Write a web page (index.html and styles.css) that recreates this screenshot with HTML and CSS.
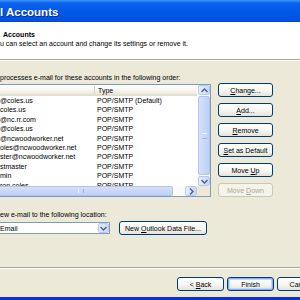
FILE: index.html
```html
<!DOCTYPE html>
<html>
<head>
    <meta charset="UTF-8">
    <title>E-mail Accounts</title>
    <link rel="stylesheet" href="styles.css">
</head>
<body>

<div class="window">
    <div class="titlebar">l Accounts</div>

    <div class="header">
        <div class="header-title">Accounts</div>
        <div class="header-text">u can select an account and change its settings or remove it.</div>
    </div>

    <div class="main">
        <div class="label order-label">processes e-mail for these accounts in the following order:</div>

        <div class="accounts">
            <div class="listbox">
                <div class="list-inner">
                    <div class="list-head">
                        <span class="col-name"></span>
                        <span class="col-type">Type</span>
                    </div>
                    <div class="rows">
                        <div class="row"><span class="col-name">@coles.us</span><span class="col-type">POP/SMTP (Default)</span></div>
                        <div class="row"><span class="col-name">coles.us</span><span class="col-type">POP/SMTP</span></div>
                        <div class="row"><span class="col-name">@nc.rr.com</span><span class="col-type">POP/SMTP</span></div>
                        <div class="row"><span class="col-name">@coles.us</span><span class="col-type">POP/SMTP</span></div>
                        <div class="row"><span class="col-name">@ncwoodworker.net</span><span class="col-type">POP/SMTP</span></div>
                        <div class="row"><span class="col-name">oles@ncwoodworker.net</span><span class="col-type">POP/SMTP</span></div>
                        <div class="row"><span class="col-name">ster@ncwoodworker.net</span><span class="col-type">POP/SMTP</span></div>
                        <div class="row"><span class="col-name">stmaster</span><span class="col-type">POP/SMTP</span></div>
                        <div class="row"><span class="col-name">min</span><span class="col-type">POP/SMTP</span></div>
                        <div class="row"><span class="col-name">ron.coles</span><span class="col-type">POP/SMTP</span></div>
                    </div>
                    <div class="vscroll">
                        <div class="sb-btn">
                            <svg width="7" height="5" viewBox="0 0 7 5"><path d="M0.5 4 L3.5 1 L6.5 4" fill="none" stroke="#4d6185" stroke-width="1.4"/></svg>
                        </div>
                        <div class="vthumb"><span class="grip-v"></span></div>
                        <div class="sb-btn">
                            <svg width="7" height="5" viewBox="0 0 7 5"><path d="M0.5 1 L3.5 4 L6.5 1" fill="none" stroke="#4d6185" stroke-width="1.4"/></svg>
                        </div>
                    </div>
                </div>
                <div class="hscroll">
                    <div class="hthumb"><span class="grip-h"></span></div>
                    <div class="htrack"></div>
                    <div class="sb-btn">
                        <svg width="5" height="7" viewBox="0 0 5 7"><path d="M1 0.5 L4 3.5 L1 6.5" fill="none" stroke="#4d6185" stroke-width="1.4"/></svg>
                    </div>
                    <div class="corner"></div>
                </div>
            </div>

            <div class="side-buttons">
                <button class="xp-btn"><u>C</u>hange...</button>
                <button class="xp-btn"><u>A</u>dd...</button>
                <button class="xp-btn"><u>R</u>emove</button>
                <button class="xp-btn"><u>S</u>et as Default</button>
                <button class="xp-btn">Move <u>U</u>p</button>
                <button class="xp-btn" disabled>Move <u>D</u>own</button>
            </div>
        </div>

        <div class="label deliver-label">ew e-mail to the following location:</div>
        <div class="deliver">
            <div class="select">
                <span class="select-text">Email</span>
                <span class="select-btn">
                    <svg width="7" height="5" viewBox="0 0 7 5"><path d="M0.5 1 L3.5 4 L6.5 1" fill="none" stroke="#4d6185" stroke-width="1.4"/></svg>
                </span>
            </div>
            <button class="xp-btn wide">New <u>O</u>utlook Data File...</button>
        </div>
    </div>

    <div class="footer">
        <button class="xp-btn">&lt; <u>B</u>ack</button>
        <button class="xp-btn default">Finish</button>
        <button class="xp-btn">Cancel</button>
    </div>
</div>

</body>
</html>
```

FILE: styles.css
```css
body {
    margin: 0;
    padding: 0;
    font-family: "Liberation Sans", Arial, sans-serif;
    font-size: 7px;
    color: #000;
    background-color: #ece9d8;
}

.window {
    width: 300px;
    height: 300px;
    overflow: hidden;
    display: flex;
    flex-direction: column;
    background-color: #ece9d8;
    border-bottom: 3px solid #0831d9;
    box-sizing: border-box;
}

/* Title bar */
.titlebar {
    height: 22px;
    line-height: 24px;
    flex-shrink: 0;
    background: linear-gradient(#3d95ff 0, #0a62ec 3px, #0058e6 12px, #0253e1 20px, #0845c8 22px);
    color: white;
    font-weight: bold;
    font-size: 11.5px;
    padding-left: 0;
    white-space: nowrap;
    text-shadow: 1px 1px 0 #0a2a9a;
}

/* White header */
.header {
    height: 38px;
    flex-shrink: 0;
    background-color: #fff;
    border-bottom: 1px solid #aca899;
    box-shadow: 0 1px 0 #fff;
    padding-top: 8px;
    box-sizing: border-box;
    white-space: nowrap;
}

.header-title {
    font-weight: bold;
    padding-left: 3px;
    line-height: 9px;
}

.header-text {
    line-height: 10px;
}

/* Main area */
.main {
    flex: 1;
    padding-top: 13px;
}

.label {
    white-space: nowrap;
    line-height: 9px;
}

.accounts {
    display: flex;
    gap: 7px;
    margin-top: 2px;
}

.listbox {
    width: 211px;
    height: 113px;
    border: 1px solid #7f9db9;
    border-left: none;
    box-sizing: border-box;
    background-color: #fff;
    display: flex;
    flex-direction: column;
    overflow: hidden;
}

.list-inner {
    flex: 1;
    display: flex;
    flex-wrap: wrap;
    position: relative;
    overflow: hidden;
}

.list-head {
    width: 197px;
    height: 11px;
    line-height: 11px;
    display: flex;
    background: linear-gradient(#fff, #f6f5ee 60%, #ebeadb);
    border-bottom: 2px solid #e2e0d0;
    box-sizing: border-box;
}

.list-head .col-name {
    border-right: 1px solid #d6d2c2;
    height: 8px;
    margin-top: 1px;
}

.rows {
    width: 197px;
}

.row {
    display: flex;
    height: 9.4px;
    line-height: 9.4px;
    white-space: nowrap;
}

.col-name {
    width: 94px;
    flex-shrink: 0;
    overflow: hidden;
}

.col-type {
    padding-left: 3px;
}

/* Scrollbars */
.vscroll {
    position: absolute;
    right: 0;
    top: 0;
    bottom: 0;
    width: 12px;
    display: flex;
    flex-direction: column;
    background-color: #fbfbf8;
}

.sb-btn {
    width: 12px;
    height: 10px;
    flex-shrink: 0;
    display: flex;
    align-items: center;
    justify-content: center;
    background: linear-gradient(90deg, #e6eefc, #c8d8f8);
    border: 1px solid #b7c9f0;
    border-radius: 2px;
    box-sizing: border-box;
}

.vthumb {
    flex: 1;
    margin: 1px 0;
    background: linear-gradient(90deg, #d4e0fb, #bfd0f6);
    border: 1px solid #b3c5ee;
    border-radius: 2px;
    display: flex;
    align-items: center;
    justify-content: center;
}

.grip-v {
    width: 5px;
    height: 4px;
    border-top: 1px solid #eef3fe;
    border-bottom: 1px solid #9fb4e4;
}

.hscroll {
    height: 10px;
    display: flex;
    flex-shrink: 0;
    background-color: #fbfbf8;
}

.hthumb {
    width: 173px;
    background: linear-gradient(#d4e0fb, #bfd0f6);
    border: 1px solid #b3c5ee;
    border-left: none;
    border-radius: 0 2px 2px 0;
    box-sizing: border-box;
    display: flex;
    align-items: center;
    justify-content: center;
    margin-right: 0;
}

.grip-h {
    width: 4px;
    height: 4px;
    border-left: 1px solid #eef3fe;
    border-right: 1px solid #9fb4e4;
    margin-right: 10px;
}

.htrack {
    width: 12px;
}

.hscroll .sb-btn {
    width: 12px;
    height: 10px;
}

.corner {
    flex: 1;
    background-color: #ece9d8;
}

/* Buttons */
.side-buttons {
    display: flex;
    flex-direction: column;
    gap: 6px;
    margin-top: -1px;
}

.xp-btn {
    width: 55px;
    height: 14px;
    padding: 0;
    font-family: "Liberation Sans", Arial, sans-serif;
    font-size: 7px;
    color: #000;
    background: linear-gradient(#fff, #f4f4f0 60%, #e3e2da);
    border: 1px solid #003c74;
    border-radius: 3px;
    white-space: nowrap;
    cursor: pointer;
}

.xp-btn u {
    text-decoration: underline;
}

.xp-btn:disabled {
    color: #aca899;
    border-color: #c9c7ba;
    background: #f5f4ea;
}

.xp-btn.wide {
    width: 88px;
    height: 14px;
}

.xp-btn.default {
    box-shadow: inset 0 0 0 1px #8cb0f8, inset 0 0 0 2px #c3d5fd;
}

/* Delivery row */
.deliver-label {
    margin-top: 13px;
}

.deliver {
    display: flex;
    align-items: center;
    gap: 9px;
    margin-top: 2px;
}

.select {
    width: 110px;
    height: 12px;
    background-color: #fff;
    border: 1px solid #7f9db9;
    border-left: none;
    box-sizing: border-box;
    display: flex;
    align-items: center;
    justify-content: space-between;
}

.select-btn {
    width: 11px;
    height: 10px;
    display: flex;
    align-items: center;
    justify-content: center;
    background: linear-gradient(90deg, #e6eefc, #c8d8f8);
    border: 1px solid #b7c9f0;
    border-radius: 2px;
    box-sizing: border-box;
}

/* Footer */
.footer {
    height: 30px;
    flex-shrink: 0;
    border-top: 1px solid #aca899;
    box-shadow: inset 0 1px 0 #fff;
    display: flex;
    gap: 3px;
    padding-left: 177px;
    padding-top: 9px;
    box-sizing: border-box;
}

.footer .xp-btn {
    width: 47px;
    flex-shrink: 0;
}
```
